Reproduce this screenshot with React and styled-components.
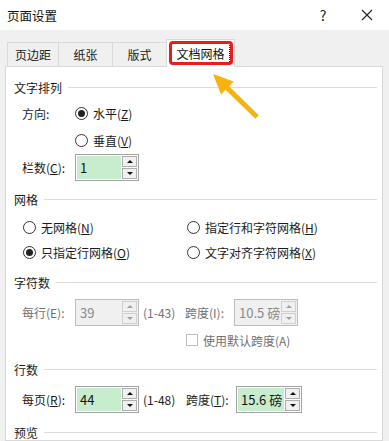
import styled, { createGlobalStyle } from "styled-components";

const GlobalStyle = createGlobalStyle`
  html, body { margin: 0; padding: 0; background: #fff; }
  body {
    font-family: "Noto Sans CJK SC", "Microsoft YaHei", sans-serif;
    font-size: 12px;
    color: #1a1a1a;
  }
`;

const Window = styled.div`
  position: relative;
  width: 389px;
  height: 441px;
  overflow: hidden;
  background: #f0f0f0;
  display: flex;
  flex-direction: column;
`;

const TitleBar = styled.div`
  height: 30px;
  flex-shrink: 0;
  background: #fff;
  display: flex;
  align-items: center;
  padding-left: 7px;
`;

const Title = styled.div`
  flex: 1;
  font-size: 12.5px;
  color: #111;
`;

const TitleButton = styled.div`
  width: 44px;
  height: 30px;
  display: flex;
  align-items: center;
  justify-content: center;
  font-size: 14px;
  color: #222;
`;

const TabRow = styled.div`
  display: flex;
  align-items: flex-end;
  height: 27px;
  margin-top: 9px;
  padding-left: 7px;
  flex-shrink: 0;
`;

const Tab = styled.div`
  position: relative;
  box-sizing: border-box;
  width: ${(p) => p.$w}px;
  height: ${(p) => (p.$active ? 28 : 24)}px;
  margin-right: -1px;
  margin-bottom: ${(p) => (p.$active ? -1 : 0)}px;
  border: 1px solid #d9d9d9;
  border-bottom: none;
  background: ${(p) => (p.$active ? "#fff" : "#f0f0f0")};
  z-index: ${(p) => (p.$active ? 2 : 1)};
  display: flex;
  align-items: center;
  justify-content: center;
  padding: ${(p) => (p.$active ? "1px 1px 2px 2px" : "0")};
`;

const Marked = styled.div`
  box-sizing: border-box;
  width: 100%;
  height: 100%;
  border: 3px solid #ea1c1c;
  border-radius: 4px;
  display: flex;
  align-items: center;
  justify-content: center;
  color: #111;
`;

const Focus = styled.span`
  padding-right: 4px;
  border-right: 1px dotted #222;
  margin-right: -4px;
`;

const Panel = styled.div`
  flex: 1;
  box-sizing: border-box;
  width: 378px;
  margin-left: 5px;
  border: 1px solid #d9d9d9;
  background: #fff;
  padding: 12px 5px 0 8px;
`;

const Heading = styled.div`
  display: flex;
  align-items: center;
  gap: 6px;
  height: 16px;
  margin-top: ${(p) => p.$mt || 0}px;
  color: #1a1a1a;
  &::after {
    content: "";
    flex: 1;
    height: 1px;
    background: #dcdcdc;
  }
`;

const Row = styled.div`
  display: flex;
  align-items: center;
  height: ${(p) => p.$h || 26}px;
  margin-top: ${(p) => p.$mt || 0}px;
  padding-left: ${(p) => p.$indent || 8}px;
`;

const Label = styled.div`
  width: ${(p) => p.$w || 53}px;
  flex-shrink: 0;
  white-space: nowrap;
  color: ${(p) => (p.$disabled ? "#707070" : "#1a1a1a")};
`;

const RadioGrid = styled.div`
  display: grid;
  grid-template-columns: 164px auto;
  grid-auto-rows: 25px;
  align-items: center;
`;

const Option = styled.div`
  display: flex;
  align-items: center;
  gap: 5px;
  white-space: nowrap;
  color: ${(p) => (p.$disabled ? "#707070" : "#1a1a1a")};
`;

const Radio = styled.span`
  box-sizing: border-box;
  width: 13px;
  height: 13px;
  border-radius: 50%;
  border: 1px solid #333;
  display: flex;
  align-items: center;
  justify-content: center;
  &::after {
    content: "";
    width: 7px;
    height: 7px;
    border-radius: 50%;
    background: ${(p) => (p.$checked ? "#222" : "transparent")};
  }
`;

const Check = styled.span`
  box-sizing: border-box;
  width: 12px;
  height: 12px;
  border: 1px solid #bdbdbd;
  background: #fff;
`;

const Spin = styled.div`
  box-sizing: border-box;
  width: ${(p) => p.$w || 64}px;
  height: 27px;
  flex-shrink: 0;
  border: 1px solid ${(p) => (p.$disabled ? "#bdbdbd" : "#a3a3a3")};
  padding: 1px;
  display: flex;
  gap: 1px;
  background: ${(p) => (p.$disabled ? "#f0f0f0" : "#fff")};
`;

const Field = styled.div`
  flex: 1;
  overflow: hidden;
  white-space: nowrap;
  padding-left: 3px;
  font-size: 13px;
  line-height: 23px;
  background: ${(p) => (p.$disabled ? "#f0f0f0" : "#c8ecce")};
  color: ${(p) => (p.$disabled ? "#8a8a8a" : "#141414")};
`;

const Arrows = styled.div`
  width: 15px;
  display: flex;
  flex-direction: column;
  gap: 1px;
`;

const ArrowBtn = styled.div`
  flex: 1;
  box-sizing: border-box;
  border: 1px solid ${(p) => (p.$disabled ? "#d0d0d0" : "#adadad")};
  background: #f0f0f0;
  display: flex;
  align-items: center;
  justify-content: center;
  &::after {
    content: "";
    border-left: 3px solid transparent;
    border-right: 3px solid transparent;
    ${(p) => (p.$down ? "border-top" : "border-bottom")}: 3px solid
      ${(p) => (p.$disabled ? "#a0a0a0" : "#111")};
  }
`;

const Range = styled.div`
  width: ${(p) => p.$w || 47}px;
  flex-shrink: 0;
  padding-left: 4px;
  box-sizing: border-box;
  white-space: nowrap;
  color: ${(p) => (p.$disabled ? "#707070" : "#1a1a1a")};
`;

const Pointer = styled.svg`
  position: absolute;
  left: 0;
  top: 0;
  pointer-events: none;
`;

function SpinBox({ value, disabled, w }) {
  return (
    <Spin $disabled={disabled} $w={w}>
      <Field $disabled={disabled}>{value}</Field>
      <Arrows>
        <ArrowBtn $disabled={disabled} />
        <ArrowBtn $disabled={disabled} $down />
      </Arrows>
    </Spin>
  );
}

const tabs = [
  { name: "页边距", w: 52 },
  { name: "纸张", w: 55 },
  { name: "版式", w: 55 },
];

function App() {
  return (
    <>
      <GlobalStyle />
      <Window>
        <TitleBar>
          <Title>页面设置</Title>
          <TitleButton>?</TitleButton>
          <TitleButton>
            <svg width="12" height="12" viewBox="0 0 12 12">
              <path d="M1 1 L11 11 M11 1 L1 11" stroke="#222" strokeWidth="1.1" />
            </svg>
          </TitleButton>
        </TitleBar>

        <TabRow>
          {tabs.map((t) => (
            <Tab key={t.name} $w={t.w}>{t.name}</Tab>
          ))}
          <Tab $w={69} $active>
            <Marked>
              <Focus>文档网格</Focus>
            </Marked>
          </Tab>
        </TabRow>

        <Panel>
          <Heading>文字排列</Heading>
          <Row $mt={5}>
            <Label>方向:</Label>
            <Option>
              <Radio $checked />
              <span>水平(<u>Z</u>)</span>
            </Option>
          </Row>
          <Row $mt={1}>
            <Label />
            <Option>
              <Radio />
              <span>垂直(<u>V</u>)</span>
            </Option>
          </Row>
          <Row $mt={1}>
            <Label>栏数(<u>C</u>):</Label>
            <SpinBox value="1" />
          </Row>

          <Heading $mt={11}>网格</Heading>
          <Row $mt={8} $h={50} $indent={9}>
            <RadioGrid>
              <Option>
                <Radio />
                <span>无网格(<u>N</u>)</span>
              </Option>
              <Option>
                <Radio />
                <span>指定行和字符网格(<u>H</u>)</span>
              </Option>
              <Option>
                <Radio $checked />
                <span>只指定行网格(<u>O</u>)</span>
              </Option>
              <Option>
                <Radio />
                <span>文字对齐字符网格(<u>X</u>)</span>
              </Option>
            </RadioGrid>
          </Row>

          <Heading $mt={9}>字符数</Heading>
          <Row $mt={8} $h={28}>
            <Label $disabled>每行(E):</Label>
            <SpinBox value="39" disabled />
            <Range $disabled $w={46}>(1-43)</Range>
            <Label $disabled $w={49}>跨度(I):</Label>
            <SpinBox value="10.5 磅" disabled />
          </Row>
          <Row $mt={1} $indent={172}>
            <Option $disabled>
              <Check />
              <span>使用默认跨度(A)</span>
            </Option>
          </Row>

          <Heading $mt={8}>行数</Heading>
          <Row $mt={8} $h={28}>
            <Label>每页(<u>R</u>):</Label>
            <SpinBox value="44" />
            <Range $w={47}>(1-48)</Range>
            <Label $w={50}>跨度(<u>T</u>):</Label>
            <SpinBox value="15.6 磅" w={66} />
          </Row>

          <Heading $mt={11}>预览</Heading>
        </Panel>

        <Pointer width="389" height="441">
          <polygon
            points="213,74 233.6,81.6 229.1,86.2 258.7,115.2 255.3,118.8 225.5,89.8 221,94.4"
            fill="#f7b20f"
          />
        </Pointer>
      </Window>
    </>
  );
}

export default App;
